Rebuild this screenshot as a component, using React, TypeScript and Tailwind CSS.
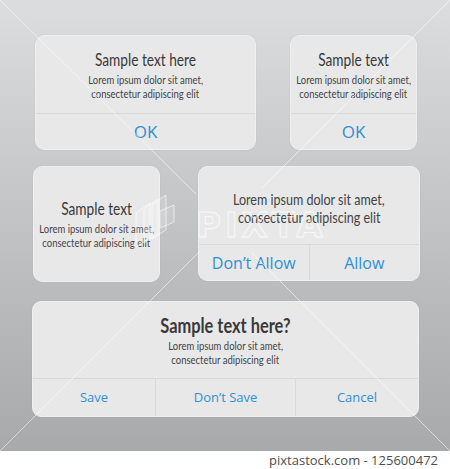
import React from "react";

const bodyFont = { fontFamily: 'Lato, "Open Sans", sans-serif' };
const buttonFont = { fontFamily: '"Open Sans", "Liberation Sans", sans-serif' };

// A single line of narrow text: Lato squeezed horizontally to read as a condensed face.
function Line({ children, squeeze }: { children: React.ReactNode; squeeze: string }) {
  return <span className={`inline-block whitespace-nowrap origin-center ${squeeze}`}>{children}</span>;
}

function Card({ className, children }: { className: string; children: React.ReactNode }) {
  return (
    <div
      className={`flex flex-col rounded-[9px] bg-[#e8e8e9] border border-[#f0f0f1] shadow-[0_0_1px_rgba(0,0,0,0.18)] overflow-hidden ${className}`}
    >
      {children}
    </div>
  );
}

function Body({ className = "", children }: { className?: string; children: React.ReactNode }) {
  return (
    <div className={`flex flex-1 flex-col items-center justify-center text-center ${className}`} style={bodyFont}>
      {children}
    </div>
  );
}

function Button({ label, className = "", textClass }: { label: string; className?: string; textClass: string }) {
  return (
    <div className={`flex items-center justify-center text-[#2f8fd4] ${textClass} ${className}`} style={buttonFont}>
      {label}
    </div>
  );
}

function Lorem({ className = "", squeeze }: { className?: string; squeeze: string }) {
  return (
    <div className={`flex flex-col items-center text-[#444445] ${className}`}>
      <Line squeeze={squeeze}>Lorem ipsum dolor sit amet,</Line>
      <Line squeeze={squeeze}>consectetur adipiscing elit</Line>
    </div>
  );
}

export default function App() {
  return (
    <div className="w-[450px] h-[469px] bg-white">
      <div className="relative h-[451px] bg-gradient-to-b from-[#dcdddf] to-[#a8a9ab] overflow-hidden">
        {/* Row 1 */}
        <div className="flex pt-[35px] pl-[35px]">
          <Card className="w-[221px] h-[115px]">
            <Body className="pt-[1px]">
              <div className="text-[18px] leading-[21px] text-[#39393a]">
                <Line squeeze="scale-x-[0.76]">Sample text here</Line>
              </div>
              <Lorem className="mt-[3px] text-[12px] leading-[14px]" squeeze="scale-x-[0.79]" />
            </Body>
            <div className="flex h-[36px] border-t border-[#d9d9da]">
              <Button label="OK" className="flex-1" textClass="text-[17px]" />
            </div>
          </Card>
          <Card className="ml-[34px] w-[127px] h-[115px]">
            <Body className="pt-[1px]">
              <div className="text-[18px] leading-[21px] text-[#39393a]">
                <Line squeeze="scale-x-[0.76]">Sample text</Line>
              </div>
              <Lorem className="mt-[3px] text-[12px] leading-[14px]" squeeze="scale-x-[0.79]" />
            </Body>
            <div className="flex h-[36px] border-t border-[#d9d9da]">
              <Button label="OK" className="flex-1" textClass="text-[17px]" />
            </div>
          </Card>
        </div>

        {/* Row 2 */}
        <div className="flex pt-[16px] pl-[33px]">
          <Card className="w-[127px] h-[116px]">
            <Body>
              <div className="text-[18px] leading-[21px] text-[#39393a]">
                <Line squeeze="scale-x-[0.76]">Sample text</Line>
              </div>
              <Lorem className="mt-[3px] text-[12px] leading-[14px]" squeeze="scale-x-[0.79]" />
            </Body>
          </Card>
          <Card className="ml-[38px] w-[222px] h-[115px]">
            <Body className="pt-[4px]">
              <Lorem className="text-[15px] leading-[18px]" squeeze="scale-x-[0.835]" />
            </Body>
            <div className="flex h-[36px] border-t border-[#d9d9da]">
              <Button label="Don’t Allow" className="flex-1" textClass="text-[16px]" />
              <Button label="Allow" className="flex-1 border-l border-[#d9d9da]" textClass="text-[16px]" />
            </div>
          </Card>
        </div>

        {/* Row 3 */}
        <div className="flex pt-[19px] pl-[32px]">
          <Card className="w-[387px] h-[116px]">
            <Body className="pt-[1px]">
              <div className="text-[20px] leading-[23px] font-bold text-[#39393a]">
                <Line squeeze="scale-x-[0.82]">Sample text here?</Line>
              </div>
              <Lorem className="mt-[2px] text-[12px] leading-[14px]" squeeze="scale-x-[0.79]" />
            </Body>
            <div className="flex h-[38px] border-t border-[#d9d9da]">
              <Button label="Save" className="w-[122px]" textClass="text-[13px]" />
              <Button label="Don’t Save" className="w-[140px] border-l border-[#d9d9da]" textClass="text-[13px]" />
              <Button label="Cancel" className="flex-1 border-l border-[#d9d9da]" textClass="text-[13px]" />
            </div>
          </Card>
        </div>

        {/* stock watermark lines and mark */}
        <svg className="pointer-events-none absolute inset-0" width="450" height="451" viewBox="0 0 450 451">
          <g stroke="#ffffff" strokeOpacity="0.55" strokeWidth="1" fill="none">
            <line x1="0" y1="0" x2="196" y2="194" />
            <line x1="450" y1="0" x2="262" y2="188" />
            <line x1="0" y1="451" x2="200" y2="251" />
            <line x1="450" y1="451" x2="252" y2="253" />
          </g>
          <g stroke="#ffffff" strokeOpacity="0.6" strokeWidth="1" fill="#ffffff" fillOpacity="0.12">
            <path d="M136 213 L150 203 L150 238 L136 247 Z" />
            <path d="M144 209 L158 199 L158 234 L144 243 Z" />
            <path d="M152 205 L166 195 L166 230 L152 239 Z" />
            <path d="M160 211 L174 205 L174 222 L160 228 Z" />
          </g>
        </svg>
        <div
          className="pointer-events-none absolute left-[196px] top-[207px] text-[34px] leading-[36px] font-bold tracking-[4px] text-transparent [-webkit-text-stroke:1px_rgba(255,255,255,0.7)]"
          style={{ fontFamily: '"DejaVu Sans", sans-serif' }}
        >
          PIXTA
        </div>
      </div>
      <div className="flex h-[18px] items-center justify-end pr-[12px]">
        <span className="text-[13px] leading-[18px] text-[#4d4d4d]" style={{ fontFamily: '"Open Sans", sans-serif' }}>
          pixtastock.com - 125600472
        </span>
      </div>
    </div>
  );
}
